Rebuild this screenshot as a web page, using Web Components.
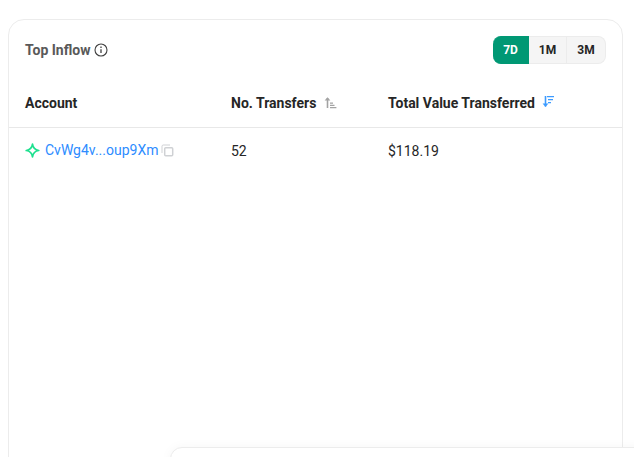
<!DOCTYPE html>
<html>
<head>
<meta charset="utf-8">
<style>
html, body { margin: 0; height: 100%; overflow: hidden; background: #fff; }
body { font-family: Roboto, sans-serif; color: #262626; }
</style>
</head>
<body>
<inflow-page></inflow-page>

<script>
class RangeTabs extends HTMLElement {
    constructor() {
        super();
        this.attachShadow({ mode: 'open' });
        this.shadowRoot.innerHTML = `
            <style>
                :host { display: flex; height: 28px; font: 700 12px/28px Roboto, sans-serif; }
                .tab { width: 38px; text-align: center; background: #f5f5f5; color: #262626;
                    border: solid #ececec; border-width: 1px 1px 1px 0; box-sizing: border-box; line-height: 26px; }
                .tab.on { width: 36px; background: #009874; color: #fff; border-color: #009874; border-radius: 8px 0 0 8px; }
                .tab:last-child { width: 39px; border-radius: 0 8px 8px 0; }
            </style>
            <div class="tab on">7D</div><div class="tab">1M</div><div class="tab">3M</div>
        `;
    }
}

class SortIcon extends HTMLElement {
    constructor() {
        super();
        this.attachShadow({ mode: 'open' });
        const active = this.getAttribute('dir') === 'down';
        const arrow = active
            ? '<path d="M3.5 0v10.5" fill="none" stroke="currentColor" stroke-width="1.6"/><path d="M0.6 7.6h5.8L3.5 11Z" fill="currentColor"/><path d="M5 0h7v1.3H5zM6 3h5v1.3H6zM6 6h3v1.3H6z" fill="currentColor"/>'
            : '<path d="M3.5 11V1" fill="none" stroke="currentColor" stroke-width="1.6"/><path d="M0.6 3.6h5.8L3.5 0.2Z" fill="currentColor"/><path d="M6 5.6h3v1.2H6zM6 7.8h4.5V9H6zM6 10h6.4v1.2H6z" fill="currentColor"/>';
        this.shadowRoot.innerHTML = `
            <style>
                :host { display: inline-flex; color: ${active ? '#3d9bff' : '#a3a3a3'}; }
                svg { display: block; }
            </style>
            <svg width="13" height="12" viewBox="0 0 13 12">${arrow}</svg>
        `;
    }
}

class AccountLink extends HTMLElement {
    constructor() {
        super();
        this.attachShadow({ mode: 'open' });
        this.shadowRoot.innerHTML = `
            <style>
                :host { display: flex; align-items: center; color: #2d8cff; font-size: 14px; margin-top: -3px; }
                .star { margin-right: 5px; margin-top: 2px; display: block; }
                .copy { margin-left: 3px; margin-top: 2px; display: block; }
            </style>
            <svg class="star" width="15" height="15" viewBox="0 0 15 15">
                <path d="M7.5 1.2C8 5 10 7 13.8 7.5 10 8 8 10 7.5 13.8 7 10 5 8 1.2 7.5 5 7 7 5 7.5 1.2Z" fill="none" stroke="#1ee08f" stroke-width="1.7" stroke-linejoin="round"/>
            </svg>
            <slot></slot>
            <svg class="copy" width="13" height="13" viewBox="0 0 13 13" fill="none" stroke="#cfd1d4">
                <path d="M1 9V2.2C1 1.5 1.5 1 2.2 1H9" stroke-width="1"/>
                <rect x="3.7" y="3.7" width="8" height="8" rx="1" stroke-width="1.5"/>
            </svg>
        `;
    }
}

class InflowTable extends HTMLElement {
    constructor() {
        super();
        this.attachShadow({ mode: 'open' });
        this.shadowRoot.innerHTML = `
            <style>
                :host { display: block; font-size: 14px; line-height: 20px; }
                .row { display: grid; grid-template-columns: 206px 157px 1fr; padding: 0 16px; }
                .head { box-sizing: border-box; height: 48px; padding-bottom: 1px; align-items: center; font-weight: 700; color: #262626;
                    border-bottom: 1px solid #e8e8e8; }
                .head > div { display: flex; align-items: center; }
                .body { height: 46px; align-items: center; color: #262626; }
                .g1 { margin-left: 8px; margin-top: -1px; }
                .g2 { margin-left: 7px; margin-top: -3px; }
            </style>
            <div class="row head">
                <div>Account</div>
                <div>No. Transfers<sort-icon class="g1"></sort-icon></div>
                <div>Total Value Transferred<sort-icon class="g2" dir="down"></sort-icon></div>
            </div>
            <div class="row body">
                <account-link>CvWg4v...oup9Xm</account-link>
                <div>52</div>
                <div>$118.19</div>
            </div>
        `;
    }
}

class InflowCard extends HTMLElement {
    constructor() {
        super();
        this.attachShadow({ mode: 'open' });
        this.shadowRoot.innerHTML = `
            <style>
                :host { display: block; height: 600px; box-sizing: border-box; background: #fff;
                    border: 1px solid #ececec; border-radius: 16px; }
                header { display: flex; justify-content: space-between; align-items: center;
                    height: 28px; padding: 16px; }
                .title { display: flex; align-items: center; font: 700 14px/20px Roboto, sans-serif; color: #595959; margin-top: -1px; }
                .info { margin-left: 4px; display: block; }
            </style>
            <header>
                <div class="title">Top Inflow
                    <svg class="info" width="14" height="14" viewBox="0 0 14 14" fill="none" stroke="#404040">
                        <circle cx="7" cy="7" r="6" stroke-width="1.1"/>
                        <path d="M7 6.2v3.8" stroke-width="1.3"/>
                        <path d="M7 3.6v1.5" stroke-width="1.3"/>
                    </svg>
                </div>
                <range-tabs></range-tabs>
            </header>
            <inflow-table></inflow-table>
        `;
    }
}

class InflowPage extends HTMLElement {
    constructor() {
        super();
        this.attachShadow({ mode: 'open' });
        this.shadowRoot.innerHTML = `
            <style>
                :host { display: block; padding: 19px 11px 0 8px; position: relative; height: 457px; box-sizing: border-box; overflow: hidden; }
                .popup { position: absolute; left: 170px; top: 447px; width: 500px; height: 60px; background: #fff;
                    border: 1px solid #ececec; border-radius: 12px; box-shadow: 0 0 12px rgba(0,0,0,.04); }
            </style>
            <inflow-card></inflow-card>
            <div class="popup"></div>
        `;
    }
}

customElements.define('range-tabs', RangeTabs);
customElements.define('sort-icon', SortIcon);
customElements.define('account-link', AccountLink);
customElements.define('inflow-table', InflowTable);
customElements.define('inflow-card', InflowCard);
customElements.define('inflow-page', InflowPage);
</script>
</body>
</html>
